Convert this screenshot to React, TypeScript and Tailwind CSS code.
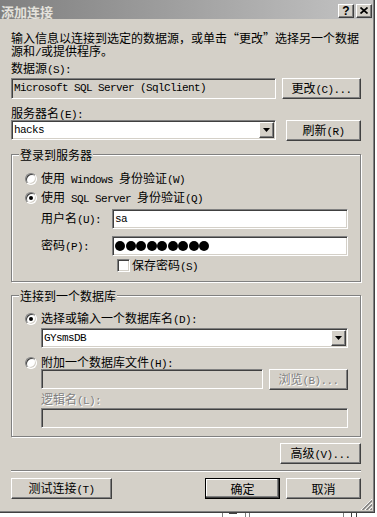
import React from "react";

const sunken =
  "border border-t-[#808080] border-l-[#808080] border-b-white border-r-white shadow-[inset_1px_1px_0_#404040,inset_-1px_-1px_0_#d4d0c8]";
const raised =
  "border border-t-white border-l-white border-b-[#404040] border-r-[#404040] shadow-[inset_-1px_-1px_0_#808080]";
const defBtn =
  "border border-black shadow-[inset_-1px_-1px_0_#404040,inset_-2px_-2px_0_#808080,inset_1px_1px_0_#ffffff]";
const disabledText = "text-[#808080] [text-shadow:1px_1px_0_#ffffff]";

function T({ s }: { s: string }) {
  const parts = s.split(/([\x20-\x7e]+)/).filter((p) => p.length > 0);
  return (
    <>
      {parts.map((p, i) =>
        /^[\x20-\x7e]+$/.test(p) ? (
          <span
            key={i}
            className="font-['Liberation_Mono',monospace] text-[11px] tracking-[-0.6px] whitespace-nowrap"
          >
            {p.replace(/ /g, "\u00a0")}
          </span>
        ) : (
          <span key={i}>{p}</span>
        )
      )}
    </>
  );
}

function Btn({
  label,
  className = "",
  def = false,
  disabled = false,
}: {
  label: string;
  className?: string;
  def?: boolean;
  disabled?: boolean;
}) {
  return (
    <div
      className={`${def ? defBtn : raised} bg-[#d4d0c8] h-[21px] flex items-center justify-center shrink-0 leading-[13px] ${
        disabled ? disabledText : "text-black"
      } ${className}`}
    >
      <span>
        <T s={label} />
      </span>
    </div>
  );
}

function Arrow() {
  return (
    <svg width="7" height="4" viewBox="0 0 7 4">
      <path d="M0 0H7L3.5 4Z" fill="#000" />
    </svg>
  );
}

function Combo({ value, className = "" }: { value: string; className?: string }) {
  return (
    <div className={`${sunken} bg-white h-[20px] flex items-stretch p-[1px] shrink-0 ${className}`}>
      <div className="flex-1 flex items-center pl-[1px] leading-[13px]">
        <T s={value} />
      </div>
      <div className={`${raised} w-[15px] bg-[#d4d0c8] flex items-center justify-center`}>
        <Arrow />
      </div>
    </div>
  );
}

function Radio({ checked }: { checked?: boolean }) {
  return (
    <span className="w-[12px] h-[12px] rounded-full bg-white border border-t-[#808080] border-l-[#808080] border-b-white border-r-white shadow-[inset_1px_1px_0_#404040,inset_-1px_-1px_0_#d4d0c8] flex items-center justify-center shrink-0">
      {checked && <span className="w-[4px] h-[4px] rounded-full bg-black" />}
    </span>
  );
}

function Group({
  title,
  className = "",
  children,
}: {
  title: string;
  className?: string;
  children: React.ReactNode;
}) {
  return (
    <div
      className={`relative w-[350px] border border-[#808080] shadow-[inset_1px_1px_0_#ffffff,1px_1px_0_#ffffff] flex flex-col ${className}`}
    >
      <span className="absolute left-[7px] top-[-7px] px-[1px] bg-[#d4d0c8] leading-[13px]">
        <T s={title} />
      </span>
      {children}
    </div>
  );
}

export default function App() {
  return (
    <div
      lang="zh-CN"
      className="w-[377px] h-[517px] bg-white overflow-hidden font-['Noto_Sans_CJK_SC',sans-serif] text-[12px] leading-[13px] text-black flex flex-col [text-autospace:no-autospace]"
    >
      {/* dialog */}
      <div className="w-[375px] h-[513px] shrink-0 bg-[#d4d0c8] border-r border-b border-r-[#404040] border-b-[#404040]">
        <div className="relative h-full border-r border-b border-r-[#808080] border-b-[#808080] flex flex-col">
          {/* title bar */}
          <div className="h-[19px] w-full bg-gradient-to-r from-[#808080] to-[#c4c4c4] flex items-center justify-between shrink-0">
            <span className="pl-[1px] pt-[3px] text-[13px] font-bold text-[#e4e2dc] leading-[15px]">
              添加连接
            </span>
            <div className="flex gap-[2px] pr-[1px] pt-[2px]">
              <div className={`${raised} bg-[#d4d0c8] w-[16px] h-[14px] flex items-center justify-center`}>
                <span className="font-['Liberation_Sans',sans-serif] font-bold text-[12px] leading-[12px] text-black">
                  ?
                </span>
              </div>
              <div className={`${raised} bg-[#d4d0c8] w-[16px] h-[14px] flex items-center justify-center`}>
                <svg width="8" height="7" viewBox="0 0 8 7">
                  <path d="M0.5 0.5L7.5 6.5M7.5 0.5L0.5 6.5" stroke="#000" strokeWidth="1.7" />
                </svg>
              </div>
            </div>
          </div>

          {/* body */}
          <div className="w-[361px] pl-[11px] flex flex-col">
            <div className="mt-[12px] whitespace-nowrap">
              <div className="h-[13px]">
                <T s="输入信息以连接到选定的数据源，或单击“更改”选择另一个数据" />
              </div>
              <div className="h-[13px]">
                <T s="源和/或提供程序。" />
              </div>
            </div>

            <div className="mt-[4px] h-[13px]">
              <T s="数据源(S):" />
            </div>
            <div className="mt-[4px] flex gap-[6px]">
              <div className={`${sunken} w-[265px] h-[21px] bg-[#d4d0c8] flex items-center pl-[2px]`}>
                <T s="Microsoft SQL Server (SqlClient)" />
              </div>
              <Btn label="更改(C)..." className="w-[79px]" />
            </div>

            <div className="mt-[7px] h-[13px]">
              <T s="服务器名(E):" />
            </div>
            <div className="mt-[1px] flex gap-[10px] h-[21px]">
              <Combo value="hacks" className="w-[265px]" />
              <Btn label="刷新(R)" className="w-[75px]" />
            </div>

            {/* login group */}
            <Group title="登录到服务器" className="mt-[13px] h-[128px] pl-[13px]">
              <div className="mt-[17px] h-[13px] flex items-center gap-[4px]">
                <Radio />
                <span>
                  <T s="使用 Windows 身份验证(W)" />
                </span>
              </div>
              <div className="mt-[6px] h-[13px] flex items-center gap-[4px]">
                <Radio checked />
                <span>
                  <T s="使用 SQL Server 身份验证(Q)" />
                </span>
              </div>
              <div className="mt-[5px] flex items-center pl-[16px]">
                <div className="w-[71px]">
                  <T s="用户名(U):" />
                </div>
                <div className={`${sunken} w-[236px] h-[20px] bg-white flex items-center pl-[2px]`}>
                  <T s="sa" />
                </div>
              </div>
              <div className="mt-[7px] flex items-center pl-[16px]">
                <div className="w-[71px]">
                  <T s="密码(P):" />
                </div>
                <div className={`${sunken} w-[236px] h-[20px] bg-white flex items-center pl-[2px] gap-[0.5px]`}>
                  {Array.from({ length: 9 }).map((_, i) => (
                    <span key={i} className="w-[10px] h-[10px] rounded-full bg-black" />
                  ))}
                </div>
              </div>
              <div className="mt-[3px] h-[13px] flex items-center pl-[92px] gap-[2px]">
                <span className={`${sunken} w-[13px] h-[13px] bg-white shrink-0`} />
                <span>
                  <T s="保存密码(S)" />
                </span>
              </div>
            </Group>

            {/* database group */}
            <Group title="连接到一个数据库" className="mt-[13px] h-[142px] pl-[13px]">
              <div className="mt-[16px] h-[13px] flex items-center gap-[4px]">
                <Radio checked />
                <span>
                  <T s="选择或输入一个数据库名(D):" />
                </span>
              </div>
              <div className="mt-[3px] pl-[16px]">
                <Combo value="GYsmsDB" className="w-[307px]" />
              </div>
              <div className="mt-[8px] h-[13px] flex items-center gap-[4px]">
                <Radio />
                <span>
                  <T s="附加一个数据库文件(H):" />
                </span>
              </div>
              <div className="pl-[16px] flex gap-[6px] h-[21px]">
                <div className={`${sunken} w-[222px] h-[20px] bg-[#d4d0c8]`} />
                <Btn label="浏览(B)..." className="w-[79px]" disabled />
              </div>
              <div className={`mt-[2px] pl-[16px] h-[13px] ${disabledText}`}>
                <T s="逻辑名(L):" />
              </div>
              <div className="mt-[3px] pl-[16px]">
                <div className={`${sunken} w-[307px] h-[20px] bg-[#d4d0c8]`} />
              </div>
            </Group>

            <div className="mt-[6px] flex justify-end">
              <Btn label="高级(V)..." className="w-[81px]" />
            </div>

            <div className="mt-[6px] w-[350px] h-[2px] border-t border-t-[#808080] border-b border-b-white" />

            <div className="mt-[6px] flex items-center">
              <Btn label="测试连接(T)" className="w-[101px]" />
              <Btn label="确定" def className="w-[75px] ml-auto" />
              <Btn label="取消" className="w-[75px] ml-[6px]" />
            </div>
          </div>

          {/* size grip */}
          <svg
            className="absolute right-[1px] bottom-[1px]"
            width="12"
            height="12"
            viewBox="0 0 12 12"
          >
            <path d="M1 12L12 1" stroke="#ffffff" strokeWidth="1" />
            <path d="M2.5 12L12 2.5" stroke="#808080" strokeWidth="1.5" />
            <path d="M5 12L12 5" stroke="#ffffff" strokeWidth="1" />
            <path d="M6.5 12L12 6.5" stroke="#808080" strokeWidth="1.5" />
            <path d="M9 12L12 9" stroke="#ffffff" strokeWidth="1" />
            <path d="M10.5 12L12 10.5" stroke="#808080" strokeWidth="1.5" />
          </svg>
        </div>
      </div>

      {/* window behind, peeking below */}
      <div className="flex-1 flex bg-white">
        <div className="ml-[222px] w-px bg-[#808080]" />
        <div className="ml-[6px] w-[8px] border-t border-[#404040]" />
        <div className="ml-[8px] w-px bg-[#808080]" />
        <div className="ml-[3px] w-px bg-[#808080]" />
        <div className="ml-[93px] w-px bg-[#808080]" />
        <div className="ml-[7px] w-px bg-[#404040]" />
        <div className="ml-[4px] w-px bg-[#404040]" />
      </div>
    </div>
  );
}
